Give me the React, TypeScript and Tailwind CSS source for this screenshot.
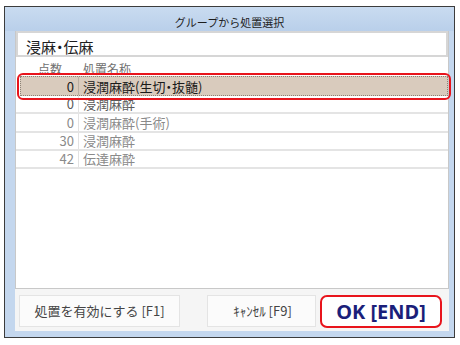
const rows = [
  { score: "0", name: "浸潤麻酔", h: "h-[18px]", color: "text-[#5a5a5a]" },
  { score: "0", name: "浸潤麻酔(手術)", h: "h-[19px]", color: "text-[#8a8a8a]" },
  { score: "30", name: "浸潤麻酔", h: "h-[18px]", color: "text-[#8a8a8a]" },
  { score: "42", name: "伝達麻酔", h: "h-[18px]", color: "text-[#8a8a8a]" },
];

// half-width middle dot, as in the original font
function Dot() {
  return <span className="[font-feature-settings:'halt']">・</span>;
}

export default function App() {
  return (
    <div
      className="relative h-[345px] w-[460px] overflow-hidden bg-white"
      style={{ fontFamily: '"Noto Sans CJK JP", "Noto Sans", sans-serif' }}
    >
      <div className="ml-[4px] mt-[6px] flex h-[332px] w-[451px] flex-col border border-[#3c3c3c] bg-[#c4d7ee]">
        {/* Title bar */}
        <div className="flex h-[24px] justify-center bg-gradient-to-b from-[#c9dbf0] to-[#b9cfea] pt-[8px] text-[11px] leading-[14px] text-[#1c1c1c]">
          グループから処置選択
        </div>

        <div className="flex flex-1 flex-col pb-[6px] pl-[10px] pr-[5px]">
          {/* Main panel */}
          <div className="flex h-[258px] flex-col border-x border-b border-[#c8c8c8] bg-white">
            <div className="h-[26px] border-2 border-[#d6d6d6] pl-[8px] pt-[5px] text-[15px] leading-[18px] text-[#1e1e1e]">
              浸麻<Dot />伝麻
            </div>

            <div className="flex h-[19px] items-end text-[12px] leading-[14px] text-[#707070]">
              <div className="w-[63px] pr-[17px] text-right">点数</div>
              <div className="pl-[4px]">処置名称</div>
            </div>

            <div className="ml-[4px] flex h-[20px] border border-dotted border-[#8c8276] bg-[#d9cbbd] text-[13px] leading-[16px] text-[#1a1a1a]">
              <div className="flex w-[58px] items-center justify-end border-r border-[#b9ada1] pr-[4px] pt-[1px]">
                0
              </div>
              <div className="flex items-center pl-[4px] pt-[1px]">
                浸潤麻酔(生切<Dot />抜髄)
              </div>
            </div>

            {rows.map((r, i) => (
              <div
                key={i}
                className={`flex ${r.h} border-b-2 border-[#e4e4e4] text-[13px] leading-[16px] ${r.color}`}
              >
                <div className="flex w-[63px] items-center justify-end border-r border-[#e2e2e2] pr-[4px]">
                  {r.score}
                </div>
                <div className="flex items-center pl-[4px]">{r.name}</div>
              </div>
            ))}
          </div>

          {/* Buttons */}
          <div className="flex flex-1 items-start bg-[#f5f5f5] pl-[4px] pt-[6px]">
            <button className="flex h-[32px] w-[161px] items-center justify-center border border-[#e4e4e4] bg-[#fbfbfb] text-[13px] leading-[16px] text-[#444]">
              処置を有効にする [F1]
            </button>
            <button className="ml-[27px] flex h-[32px] w-[109px] items-center justify-center border border-[#e4e4e4] bg-[#fbfbfb] pl-[2px] text-[13px] leading-[16px] text-[#444]">
              ｷｬﾝｾﾙ [F9]
            </button>
            <button
              className="ml-[4px] flex h-[33px] w-[122px] items-center justify-center rounded-[7px] border-2 border-[#e8141c] bg-white text-[20px] font-bold leading-[22px] text-[#1b1f7a]"
              style={{ fontFamily: '"Noto Sans", sans-serif' }}
            >
              OK [END]
            </button>
          </div>
        </div>
      </div>

      {/* Red annotation around selected row */}
      <div className="absolute left-[17px] top-[73px] h-[27px] w-[434px] rounded-[6px] border-2 border-[#e8141c]" />
    </div>
  );
}
